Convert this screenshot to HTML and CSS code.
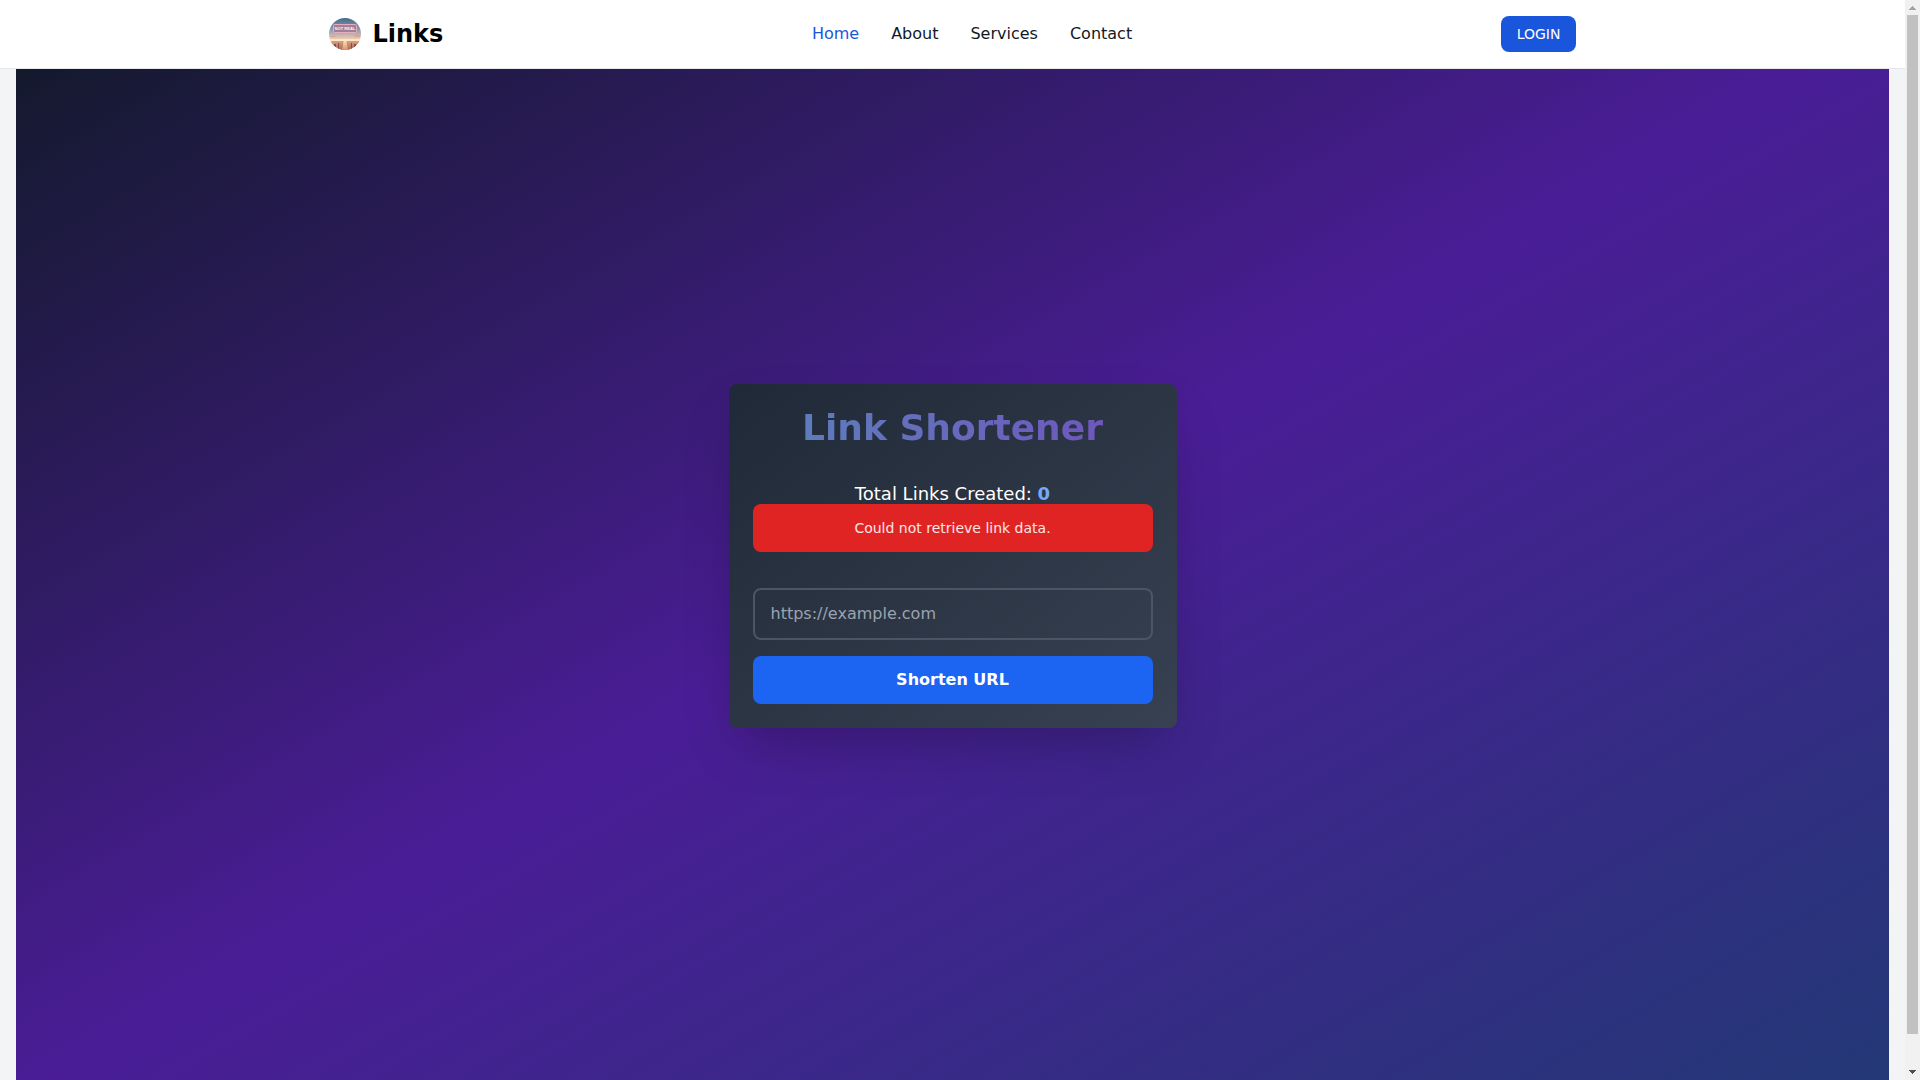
FILE: index.html
```html
<!DOCTYPE html>
<html lang="en">
<head>
  <meta charset="utf-8">
  <meta name="viewport" content="width=device-width, initial-scale=1">
  <title>Links</title>
  <link rel="stylesheet" href="styles.css">
</head>
<body>
  <div class="frame">
    <header class="navbar">
      <div class="navbar-inner">
        <a class="brand" href="#">
          <svg class="brand-logo" viewBox="0 0 32 32" aria-hidden="true">
            <defs>
              <linearGradient id="sky" x1="0" y1="0" x2="0" y2="1">
                <stop offset="0" stop-color="#456b8b"/>
                <stop offset=".3" stop-color="#7c93a8"/>
                <stop offset=".5" stop-color="#b6b2b3"/>
                <stop offset=".66" stop-color="#efcdb0"/>
                <stop offset="1" stop-color="#d69a78"/>
              </linearGradient>
              <linearGradient id="ground" x1="0" y1="0" x2="0" y2="1">
                <stop offset="0" stop-color="#dba07c"/>
                <stop offset="1" stop-color="#a9695a"/>
              </linearGradient>
              <linearGradient id="road" x1="0" y1="0" x2="0" y2="1">
                <stop offset="0" stop-color="#fff2ce"/>
                <stop offset="1" stop-color="#dc9365"/>
              </linearGradient>
              <clipPath id="disc"><circle cx="16" cy="16" r="16"/></clipPath>
            </defs>
            <g clip-path="url(#disc)">
              <rect width="32" height="32" fill="url(#sky)"/>
              <path d="M1 19q2-3 5-1t3 1zM25 18q3-3 6-1v2h-6z" fill="#d9a596"/>
              <path d="M0 23h32v9H0z" fill="url(#ground)"/>
              <path d="M5 26h2v6H5zM9 25h1v7H9zM22 25h1v7h-1zM25 26h2v6h-2z" fill="#80504a"/>
              <path d="M15 21h2l2 11h-6z" fill="url(#road)"/>
              <path d="M0 21h32v2H0z" fill="#ffe7c4"/>
              <rect x="4.500" y="6.500" width="23" height="8" rx="1" fill="#a17f9b" stroke="#e6adba"/>
              <text class="logo-sign" x="16" y="12" text-anchor="middle" font-size="4">NOT REAL</text>
              <path d="M14 16h4v2h-4z" fill="#e2a9b6"/>
            </g>
          </svg>
          <span>Links</span>
        </a>
        <nav class="nav-links" aria-label="Main">
          <a class="nav-link active" href="#" aria-current="page">Home</a>
          <a class="nav-link" href="#">About</a>
          <a class="nav-link" href="#">Services</a>
          <a class="nav-link" href="#">Contact</a>
        </nav>
        <button class="login" type="button">LOGIN</button>
      </div>
    </header>
    <main class="page">
      <section class="hero">
        <div class="card">
          <h1 class="title">Link Shortener</h1>
          <p class="total">Total Links Created: <strong class="count">0</strong></p>
          <div class="alert" role="alert">Could not retrieve link data.</div>
          <form class="form">
            <input class="url" type="url" placeholder="https://example.com" aria-label="URL to shorten">
            <button class="submit" type="button">Shorten URL</button>
          </form>
        </div>
      </section>
    </main>
  </div>
  <div class="scrollbar" aria-hidden="true">
    <svg class="scroll-arrow" viewBox="0 0 15 15" shape-rendering="crispEdges">
      <path d="M7 6h1v1h1v1h1v1h1v1H4V9h1V8h1V7h1z" fill="#a3a3a3"/>
    </svg>
    <div class="scroll-track"><div class="scroll-thumb"></div></div>
    <svg class="scroll-arrow" viewBox="0 0 15 15" shape-rendering="crispEdges">
      <path d="M4 5h7v1h-1v1H9v1H8v1H7V8H6V7H5V6H4z" fill="#505050"/>
    </svg>
  </div>
</body>
</html>
```

FILE: styles.css
```css
*, *::before, *::after {
  box-sizing: border-box;
}

body {
  display: flex;
  height: 100vh;
  margin: 0;
  overflow: hidden;
  background: #f3f4f6;
  color: #111928;
  font-family: "DejaVu Sans", sans-serif;
  font-size: 16px;
  line-height: 24px;
}

button, input {
  font: inherit;
}

a {
  color: inherit;
  text-decoration: none;
}

.frame {
  position: relative;
  flex: 1;
  min-width: 0;
}

/* The bar lies over the top of the page content. */
.navbar {
  position: absolute;
  top: 0;
  left: 0;
  right: 0;
  z-index: 10;
  background: #fff;
  border-bottom: 1px solid #e5e7eb;
}

.page {
  height: 100vh;
  padding: 16px;
  overflow-y: auto;
  scrollbar-width: none;
}

.scrollbar {
  display: flex;
  flex-direction: column;
  width: 15px;
  background: #f1f1f1;
}

.scroll-arrow {
  display: block;
  width: 15px;
  height: 15px;
}

.scroll-track {
  flex: 1;
  padding: 0 2px;
}

.scroll-thumb {
  height: 97%;
  background: #c1c1c1;
}

.navbar-inner {
  display: flex;
  align-items: center;
  justify-content: space-between;
  max-width: 1280px;
  margin: 0 auto;
  padding: 16px;
}

.brand {
  display: flex;
  align-items: center;
  gap: 12px;
  height: 36px;
  color: #000;
  font-size: 24px;
  font-weight: 700;
}

.brand-logo {
  width: 32px;
  height: 32px;
}

.logo-sign {
  fill: #fff0f2;
  font-family: "Liberation Sans", sans-serif;
  font-weight: 700;
}

.nav-links {
  display: flex;
  gap: 32px;
}

.nav-link.active {
  color: #1c56db;
}

.login {
  padding: 8px 16px;
  border: 0;
  border-radius: 8px;
  background: #1a56db;
  color: #fff;
  font-size: 14px;
  line-height: 20px;
}

.hero {
  display: flex;
  align-items: center;
  justify-content: center;
  min-height: 100vh;
  background: linear-gradient(to bottom right, #111928, #4a1d96, #233876);
}

.card {
  width: 100%;
  max-width: 448px;
  padding: 24px;
  border-radius: 8px;
  background: linear-gradient(to bottom right, #1f2937, #374151);
  box-shadow: 0 25px 50px -12px rgba(0, 0, 0, 0.25);
  text-align: center;
}

.title {
  margin: 0 0 32px;
  background: linear-gradient(to right, #5b82bb, #7251be);
  background-clip: text;
  -webkit-background-clip: text;
  color: transparent;
  font-size: 36px;
  line-height: 40px;
}

.total {
  margin: 0 0 -4px;
  color: #fff;
  font-size: 18px;
  line-height: 28px;
}

.count {
  color: #76a9fa;
}

.alert {
  margin-bottom: 36px;
  padding: 14px;
  border-radius: 8px;
  background: #e02424;
  color: #fbe4e5;
  font-size: 14px;
  line-height: 20px;
}

.form {
  display: grid;
  gap: 16px;
}

.url {
  width: 100%;
  padding: 12px 16px;
  border: 2px solid #4b5563;
  border-radius: 8px;
  background: transparent;
  color: #fff;
}

.url::placeholder {
  color: #9ca3af;
  opacity: 1;
}

.submit {
  padding: 12px;
  border: 0;
  border-radius: 8px;
  background: #1c64f2;
  color: #fff;
  font-weight: 700;
}
```
